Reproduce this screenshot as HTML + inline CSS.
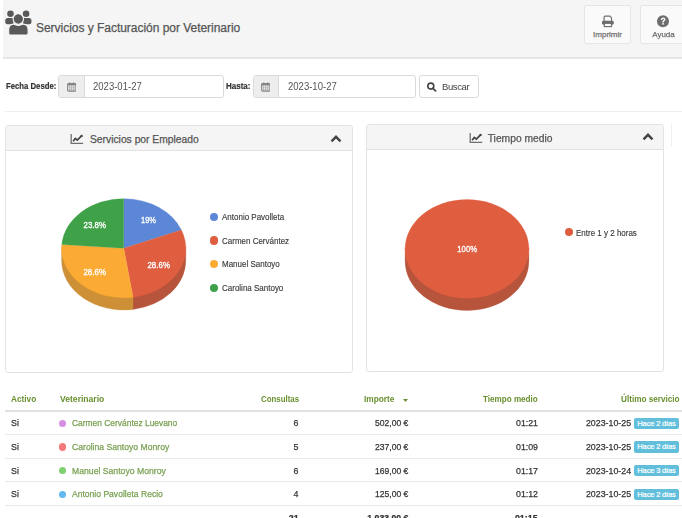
<!DOCTYPE html>
<html><head><meta charset="utf-8">
<style>
*{margin:0;padding:0;box-sizing:border-box}
html,body{width:682px;height:518px;overflow:hidden;background:#fff;font-family:"Liberation Sans",sans-serif;color:#333}
.title,.tbtn span,.pt,.td,.vn{-webkit-text-stroke:0.25px currentColor}
.lbl{-webkit-text-stroke:0.2px #333}
.abs{position:absolute}
.hdr{position:absolute;left:3px;top:0;width:679px;height:59px;background:#f5f5f5;border-bottom:2px solid #e6e6e6}
.title{position:absolute;left:36px;top:20.5px;font-size:12px;color:#555;white-space:nowrap;letter-spacing:-0.03px}
.tbtn{position:absolute;top:4.5px;width:47px;height:39.5px;background:#fafafa;border:1px solid #e6e6e6;border-radius:2px}
.tbtn span{position:absolute;left:0;width:100%;text-align:center;top:24.2px;font-size:8px;color:#707070}
.lbl{position:absolute;font-weight:bold;font-size:8.5px;color:#333;white-space:nowrap}
.ig{position:absolute;top:75px;height:23px;border:1px solid #dadada;border-radius:3px;background:#fff}
.ig .add{position:absolute;left:0;top:0;width:26px;height:21px;background:#eee;border-right:1px solid #dadada;border-radius:2px 0 0 2px}
.ig .add svg{position:absolute;left:8px;top:6px}
.ig .val{position:absolute;left:34px;top:4.8px;font-size:10px;color:#555;transform:scaleX(0.953);transform-origin:0 0}
.btn{position:absolute;left:419px;top:75px;width:60px;height:23px;border:1px solid #dadada;border-radius:3px;background:#fff}
.sep{position:absolute;left:5px;top:111px;width:677px;height:1px;background:#eee}
.panel{position:absolute;border:1px solid #e3e3e3;border-radius:3px;background:#fff}
.ph{position:absolute;left:0;top:0;width:100%;height:25px;background:#f5f5f5;border-bottom:1px solid #e3e3e3;border-radius:3px 3px 0 0}
.pt{position:absolute;top:7px;font-size:10.3px;color:#555;white-space:nowrap}
.leg{position:absolute;font-size:9.2px;color:#3a3a3a;-webkit-text-stroke:0.15px #3a3a3a;white-space:nowrap;transform:scaleX(0.87);transform-origin:0 0}
.dot{position:absolute;width:8.4px;height:8.4px;border-radius:50%}
.th{position:absolute;top:394px;font-weight:bold;font-size:9px;color:#69902f;white-space:nowrap;transform-origin:0 0}
.hl{position:absolute;left:5px;width:677px;height:1px;background:#e9e9e9}
.td{position:absolute;font-size:9.6px;color:#333;white-space:nowrap}
.r{text-align:right}
.vn{position:absolute;font-size:9.6px;color:#79a052;white-space:nowrap}
.vd{position:absolute;width:7.2px;height:7.2px;border-radius:50%;margin-left:-0.5px}
.badge{position:absolute;left:634px;width:45px;height:11.5px;background:#62bfdc;border-radius:2px;color:#fff;font-size:7.6px;text-align:center;line-height:11.5px;white-space:nowrap;letter-spacing:-0.2px;-webkit-text-stroke:0.2px #fff}
</style></head><body><div id="root" style="position:absolute;left:0;top:0;width:682px;height:518px;filter:blur(0.35px)">
<div class="hdr"></div>
<svg class="abs" style="left:0;top:0" width="40" height="40" viewBox="0 0 40 40">
 <g fill="#595959">
  <circle cx="10.5" cy="13.8" r="3.3"/><circle cx="26.1" cy="13.8" r="3.3"/>
  <path d="M5.3,22.2 V20.3 Q5.3,17.9 7.8,17.9 H13.5 V24.3 H7.4 Q5.3,24.3 5.3,22.2 Z"/>
  <path d="M31.4,22.2 V20.3 Q31.4,17.9 28.9,17.9 H23.2 V24.3 H29.3 Q31.4,24.3 31.4,22.2 Z"/>
  <circle cx="18.3" cy="19" r="5.2" stroke="#f5f5f5" stroke-width="1.1"/>
  <path d="M8.7,33.6 V29.6 Q8.7,24.4 13.4,24.1 Q18.3,26.7 23.2,24.1 Q28.1,24.4 28.1,29.6 V33.6 Q28.1,35 26.7,35 H10.1 Q8.7,35 8.7,33.6 Z" stroke="#f5f5f5" stroke-width="1.1"/>
 </g>
</svg>
<div class="title">Servicios y Facturación por Veterinario</div>
<div class="tbtn" style="left:584px"><span>Imprimir</span></div>
<svg class="abs" style="left:600px;top:14px" width="16" height="15" viewBox="600 14 16 15">
 <path d="M604.1,21 V17.2 Q604.1,16.1 605.2,16.1 H609.9 L611.5,17.7 V21" fill="none" stroke="#6e6e6e" stroke-width="1.15"/>
 <rect x="602" y="20.7" width="11.8" height="4" rx="1.4" fill="#6e6e6e"/>
 <rect x="604.3" y="23.3" width="7.2" height="3.3" fill="#fafafa" stroke="#6e6e6e" stroke-width="1.15"/>
</svg>
<div class="tbtn" style="left:640px"><span>Ayuda</span></div>
<svg class="abs" style="left:656px;top:14px" width="14" height="14" viewBox="656 14 14 14">
 <circle cx="663" cy="21.3" r="6" fill="#6e6e6e"/>
 <path d="M660.8,19.9 Q660.8,17.4 663.1,17.4 Q665.5,17.4 665.5,19.4 Q665.5,20.6 664.1,21.2 Q663.8,21.4 663.8,22 V22.4 H662.3 V21.8 Q662.3,20.7 663.3,20.2 Q664,19.9 664,19.4 Q664,18.7 663.1,18.7 Q662.3,18.7 662.2,19.9 Z" fill="#fff"/>
 <rect x="662.3" y="23.1" width="1.5" height="1.5" fill="#fff"/>
</svg>

<div class="lbl" style="left:6px;top:80.9px;font-size:9px;transform:scaleX(0.86);transform-origin:0 0">Fecha Desde:</div>
<div class="ig" style="left:58px;width:165.5px"><div class="add"><svg style="display:block" width="9.4" height="9.5" viewBox="0 0 10 10" preserveAspectRatio="none"><rect x="0.6" y="1.7" width="8.8" height="7.9" rx="1.1" fill="none" stroke="#858585" stroke-width="1.1"/><rect x="0.6" y="1.7" width="8.8" height="1.9" fill="#858585"/><path d="M2.9,0.4 V2.6 M7.1,0.4 V2.6" stroke="#858585" stroke-width="1.3"/><path d="M2.8,3.5 V9.5 M5,3.5 V9.5 M7.2,3.5 V9.5" stroke="#959595" stroke-width="0.75"/><path d="M0.6,5.8 H9.4 M0.6,7.8 H9.4" stroke="#b5b5b5" stroke-width="0.5"/></svg></div><div class="val">2023-01-27</div></div>
<div class="lbl" style="left:225.5px;top:80.9px;font-size:9px;transform:scaleX(0.89);transform-origin:0 0">Hasta:</div>
<div class="ig" style="left:252.8px;width:163.7px"><div class="add" style="width:25px"><svg style="display:block;margin-left:-1.2px" width="9.4" height="9.5" viewBox="0 0 10 10" preserveAspectRatio="none"><rect x="0.6" y="1.7" width="8.8" height="7.9" rx="1.1" fill="none" stroke="#858585" stroke-width="1.1"/><rect x="0.6" y="1.7" width="8.8" height="1.9" fill="#858585"/><path d="M2.9,0.4 V2.6 M7.1,0.4 V2.6" stroke="#858585" stroke-width="1.3"/><path d="M2.8,3.5 V9.5 M5,3.5 V9.5 M7.2,3.5 V9.5" stroke="#959595" stroke-width="0.75"/><path d="M0.6,5.8 H9.4 M0.6,7.8 H9.4" stroke="#b5b5b5" stroke-width="0.5"/></svg></div><div class="val">2023-10-27</div></div>
<div class="btn"></div>
<svg class="abs" style="left:424px;top:80px" width="15" height="14" viewBox="424 80 15 14"><circle cx="430.8" cy="86.1" r="3" fill="none" stroke="#444" stroke-width="1.6"/><path d="M432.9,88.3 L435.6,90.8" stroke="#444" stroke-width="1.8" stroke-linecap="round"/></svg>
<div class="abs" style="left:442px;top:80.5px;font-size:9.5px;color:#444;letter-spacing:-0.4px">Buscar</div>
<div class="sep"></div>

<div class="panel" style="left:5px;top:125px;width:348px;height:248px">
 <div class="ph"></div>
</div>
<div class="abs" style="left:69.5px;top:134px"><svg style="display:block" width="14" height="11" viewBox="0 0 14 11"><path d="M1.2,0 V9.3 H13.2" fill="none" stroke="#707070" stroke-width="1.3"/><path d="M3.1,7.2 L5.4,4.4 L7.3,6.1 L11.3,2.2" fill="none" stroke="#444" stroke-width="1.7" stroke-linejoin="round"/><circle cx="11.6" cy="1.9" r="1.2" fill="#444"/></svg></div>
<div class="pt" style="left:90px;top:133.7px">Servicios por Empleado</div>
<div class="abs" style="left:329.5px;top:134.5px"><svg style="display:block" width="12" height="8" viewBox="0 0 12 8"><path d="M1.5,6.3 L6,1.8 L10.5,6.3" fill="none" stroke="#444" stroke-width="2.4"/></svg></div>
<div class="panel" style="left:366px;top:124px;width:297.5px;height:248px">
 <div class="ph"></div>
</div>
<div class="abs" style="left:468.5px;top:133px"><svg style="display:block" width="14" height="11" viewBox="0 0 14 11"><path d="M1.2,0 V9.3 H13.2" fill="none" stroke="#707070" stroke-width="1.3"/><path d="M3.1,7.2 L5.4,4.4 L7.3,6.1 L11.3,2.2" fill="none" stroke="#444" stroke-width="1.7" stroke-linejoin="round"/><circle cx="11.6" cy="1.9" r="1.2" fill="#444"/></svg></div>
<div class="pt" style="left:487.7px;top:132.7px">Tiempo medio</div>
<div class="abs" style="left:641.5px;top:133px"><svg style="display:block" width="12" height="8" viewBox="0 0 12 8"><path d="M1.5,6.3 L6,1.8 L10.5,6.3" fill="none" stroke="#444" stroke-width="2.4"/></svg></div>
<div class="abs" style="left:670.5px;top:124px;width:1px;height:22px;background:#f0f0f0"></div>

<svg class="abs" style="left:0;top:0" width="682" height="518">
<path d="M185.80,246.70 A62.1,49.5 0 0,1 133.03,295.64 L133.03,309.44 A62.1,49.5 0 0,0 185.80,260.50 Z" fill="#b7543c" stroke="#b7543c" stroke-width="0.3"/>
<path d="M133.03,295.64 A62.1,49.5 0 0,1 61.60,246.70 L61.60,260.50 A62.1,49.5 0 0,0 133.03,309.44 Z" fill="#cd9037" stroke="#cd9037" stroke-width="0.3"/>
<path d="M123.70,248.20 L123.70,198.70 A62.1,49.5 0 0,1 181.44,229.98 Z" fill="#5b87d6" stroke="#5b87d6" stroke-width="0.3"/>
<path d="M123.70,248.20 L181.44,229.98 A62.1,49.5 0 0,1 133.03,297.14 Z" fill="#e05e40" stroke="#e05e40" stroke-width="0.3"/>
<path d="M123.70,248.20 L133.03,297.14 A62.1,49.5 0 0,1 61.78,244.47 Z" fill="#fbab33" stroke="#fbab33" stroke-width="0.3"/>
<path d="M123.70,248.20 L61.78,244.47 A62.1,49.5 0 0,1 123.70,198.70 Z" fill="#3fa148" stroke="#3fa148" stroke-width="0.3"/>
<text x="148.5" y="222.8" fill="#fff" stroke="#fff" stroke-width="0.35" font-size="9.6" text-anchor="middle" textLength="15.0" lengthAdjust="spacingAndGlyphs" font-family="Liberation Sans, sans-serif">19%</text>
<text x="158.7" y="267.5" fill="#fff" stroke="#fff" stroke-width="0.35" font-size="9.6" text-anchor="middle" textLength="22.5" lengthAdjust="spacingAndGlyphs" font-family="Liberation Sans, sans-serif">28.6%</text>
<text x="94.7" y="275.2" fill="#fff" stroke="#fff" stroke-width="0.35" font-size="9.6" text-anchor="middle" textLength="22.5" lengthAdjust="spacingAndGlyphs" font-family="Liberation Sans, sans-serif">28.6%</text>
<text x="94.7" y="227.7" fill="#fff" stroke="#fff" stroke-width="0.35" font-size="9.6" text-anchor="middle" textLength="22.4" lengthAdjust="spacingAndGlyphs" font-family="Liberation Sans, sans-serif">23.8%</text>
<path d="M528.90,247.40 A61.9,49.3 0 0,1 405.10,247.40 L405.10,261.20 A61.9,49.3 0 0,0 528.90,261.20 Z" fill="#b7543c" stroke="#b7543c" stroke-width="0.3"/>
<path d="M405.1,248.9 A61.9,49.3 0 1,1 528.9,248.9 A61.9,49.3 0 1,1 405.1,248.9 Z" fill="#e05e40" stroke="#e05e40" stroke-width="0.3"/>
<text x="467.2" y="252" fill="#fff" stroke="#fff" stroke-width="0.35" font-size="9.6" text-anchor="middle" textLength="19.8" lengthAdjust="spacingAndGlyphs" font-family="Liberation Sans, sans-serif">100%</text>
</svg>

<div class="dot" style="left:209.7px;top:212.8px;background:#5b87d6"></div><div class="leg" style="left:221.5px;top:212.0px">Antonio Pavolleta</div>
<div class="dot" style="left:209.7px;top:236.3px;background:#e05e40"></div><div class="leg" style="left:221.5px;top:235.5px">Carmen Cervántez</div>
<div class="dot" style="left:209.7px;top:259.5px;background:#fbab33"></div><div class="leg" style="left:221.5px;top:258.7px">Manuel Santoyo</div>
<div class="dot" style="left:209.7px;top:283.6px;background:#3fa148"></div><div class="leg" style="left:221.5px;top:282.8px">Carolina Santoyo</div>
<div class="dot" style="left:564.5px;top:228px;background:#e05e40"></div><div class="leg" style="left:575.8px;top:227.8px">Entre 1 y 2 horas</div>

<div class="th" style="left:11px;transform:scaleX(0.916)">Activo</div>
<div class="th" style="left:59.5px;transform:scaleX(0.953)">Veterinario</div>
<div class="th" style="left:260.5px;transform:scaleX(0.874)">Consultas</div>
<div class="th" style="left:364px;transform:scaleX(0.921)">Importe</div>
<svg class="abs" style="left:403px;top:399px" width="5" height="3" viewBox="0 0 5 3"><path d="M0,0 H5 L2.5,3 Z" fill="#6a8f35"/></svg>
<div class="th" style="left:483.4px;transform:scaleX(0.9)">Tiempo medio</div>
<div class="th" style="left:620.5px;transform:scaleX(0.907)">Último servicio</div>
<div class="hl" style="top:410px;height:2px;background:#e2e2e2"></div>
<div class="td" style="left:11px;top:417.45px;transform:scaleX(0.92);transform-origin:0 0">Si</div>
<div class="vd" style="left:59.5px;top:419.8px;background:#d68fe3"></div>
<div class="vn" style="left:72px;top:417.45px;transform:scaleX(0.877);transform-origin:0 0">Carmen Cervántez Luevano</div>
<div class="td r" style="right:383.4px;top:417.45px;transform:scaleX(0.92);transform-origin:100% 0">6</div>
<div class="td r" style="right:274px;top:417.45px;transform:scaleX(0.895);transform-origin:100% 0">502,00 €</div>
<div class="td r" style="right:144px;top:417.45px;transform:scaleX(0.917);transform-origin:100% 0">01:21</div>
<div class="td r" style="right:51px;top:417.45px;transform:scaleX(0.92);transform-origin:100% 0">2023-10-25</div>
<div class="badge" style="top:417.6px">Hace 2 días</div>
<div class="hl" style="top:434.0px"></div>
<div class="td" style="left:11px;top:441.1px;transform:scaleX(0.92);transform-origin:0 0">Si</div>
<div class="vd" style="left:59.5px;top:443.45px;background:#f47a7a"></div>
<div class="vn" style="left:72px;top:441.1px;transform:scaleX(0.899);transform-origin:0 0">Carolina Santoyo Monroy</div>
<div class="td r" style="right:383.4px;top:441.1px;transform:scaleX(0.92);transform-origin:100% 0">5</div>
<div class="td r" style="right:274px;top:441.1px;transform:scaleX(0.895);transform-origin:100% 0">237,00 €</div>
<div class="td r" style="right:144px;top:441.1px;transform:scaleX(0.917);transform-origin:100% 0">01:09</div>
<div class="td r" style="right:51px;top:441.1px;transform:scaleX(0.92);transform-origin:100% 0">2023-10-25</div>
<div class="badge" style="top:441.25px">Hace 2 días</div>
<div class="hl" style="top:457.65px"></div>
<div class="td" style="left:11px;top:464.75px;transform:scaleX(0.92);transform-origin:0 0">Si</div>
<div class="vd" style="left:59.5px;top:467.1px;background:#80d070"></div>
<div class="vn" style="left:72px;top:464.75px;transform:scaleX(0.902);transform-origin:0 0">Manuel Santoyo Monroy</div>
<div class="td r" style="right:383.4px;top:464.75px;transform:scaleX(0.92);transform-origin:100% 0">6</div>
<div class="td r" style="right:274px;top:464.75px;transform:scaleX(0.895);transform-origin:100% 0">169,00 €</div>
<div class="td r" style="right:144px;top:464.75px;transform:scaleX(0.917);transform-origin:100% 0">01:17</div>
<div class="td r" style="right:51px;top:464.75px;transform:scaleX(0.92);transform-origin:100% 0">2023-10-24</div>
<div class="badge" style="top:464.90000000000003px">Hace 3 días</div>
<div class="hl" style="top:481.3px"></div>
<div class="td" style="left:11px;top:488.4px;transform:scaleX(0.92);transform-origin:0 0">Si</div>
<div class="vd" style="left:59.5px;top:490.75px;background:#62b8f0"></div>
<div class="vn" style="left:72px;top:488.4px;transform:scaleX(0.892);transform-origin:0 0">Antonio Pavolleta Recio</div>
<div class="td r" style="right:383.4px;top:488.4px;transform:scaleX(0.92);transform-origin:100% 0">4</div>
<div class="td r" style="right:274px;top:488.4px;transform:scaleX(0.895);transform-origin:100% 0">125,00 €</div>
<div class="td r" style="right:144px;top:488.4px;transform:scaleX(0.917);transform-origin:100% 0">01:12</div>
<div class="td r" style="right:51px;top:488.4px;transform:scaleX(0.92);transform-origin:100% 0">2023-10-25</div>
<div class="badge" style="top:488.55px">Hace 2 días</div>
<div class="hl" style="top:504.95px"></div>
<div class="td r" style="right:383.4px;top:511.65px;font-weight:bold;transform:scaleX(0.92);transform-origin:100% 0">21</div>
<div class="td r" style="right:274px;top:511.65px;font-weight:bold;transform:scaleX(0.905);transform-origin:100% 0">1.033,00 €</div>
<div class="td r" style="right:144px;top:511.65px;font-weight:bold;transform:scaleX(0.92);transform-origin:100% 0">01:15</div>
</div></body></html>
